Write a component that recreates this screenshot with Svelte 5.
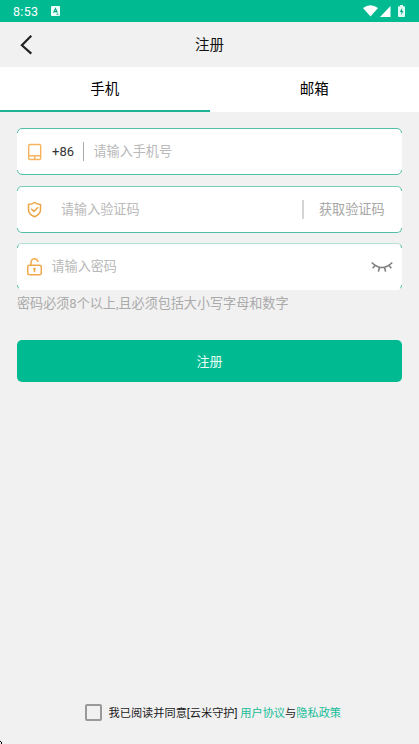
<script>
  let phone = $state('');
  let code = $state('');
  let password = $state('');
</script>

<div class="screen">
  <div class="status">
    <span class="time">8:53</span>
    <svg class="app" width="9" height="10" viewBox="0 0 9 10"><rect width="9" height="10" rx="1" fill="#effffb" /><path d="M2.600 6.800 4.500 2.600 6.400 6.800M3.300 5.600h2.400M5.500 8.300h2" fill="none" stroke="#00a984" stroke-width="1.100" /></svg>
    <span class="grow"></span>
    <svg class="wifi" width="15" height="12" viewBox="0 0 15 12"><path d="M0 3Q7.5-2.6 15 3L7.5 11.6Z" fill="#fff" /></svg>
    <svg class="signal" width="11" height="11" viewBox="0 0 11 11"><path d="M0 11 10.5 0V11Z" fill="#fff" /></svg>
    <svg class="battery" width="7" height="12" viewBox="0 0 7 12"><path d="M2 0h3v1.2h1.3q.7 0 .7.7v9.4q0 .7-.7.7H.7Q0 12 0 11.300V1.900q0-.7.7-.7H2Z" fill="#dffaf3" /><path d="M4.100 3 1.800 7h1.500v3l2-4H4.100Z" fill="#00a481" /></svg>
  </div>

  <header>
    <svg width="14" height="22" viewBox="0 0 14 22"><path d="M11.300 1.800 1.900 11.200l9.400 8.400" fill="none" stroke="#222" stroke-width="2.200" /></svg>
    <h1>注册</h1>
  </header>

  <nav>
    <div class="tab active">手机</div>
    <div class="tab">邮箱</div>
  </nav>

  <main>
    <div class="field first">
      <svg class="icon" width="18" height="20" viewBox="0 0 18 20" fill="none" stroke="#f5b460" stroke-width="1.500"><rect x="2.700" y="2.500" width="12" height="15" rx="1.500" /><path d="M2.700 13.700h12M8.700 14v3" /></svg>
      <span class="prefix">+86</span>
      <span class="bar"></span>
      <input class="phone" placeholder="请输入手机号" bind:value={phone} />
    </div>
    <div class="field second">
      <svg class="icon" width="18" height="20" viewBox="0 0 18 20" fill="none" stroke="#eda446" stroke-width="1.500"><path d="M8.500 2.500C10.500 4 12.500 4.300 14.500 4.500V9.500Q14.500 14.500 8.500 16.700 2.500 14.500 2.500 9.500V4.500C4.500 4.300 6.500 4 8.500 2.500Z" stroke-linejoin="round" /><path d="m5.200 8.800 2.700 2.600 4.300-4.200" /></svg>
      <input class="code" placeholder="请输入验证码" bind:value={code} />
      <span class="bar light"></span>
      <span class="get">获取验证码</span>
    </div>
    <div class="field third">
      <svg class="icon" width="18" height="20" viewBox="0 0 18 20" fill="none" stroke="#f2a84c" stroke-width="1.500"><rect x="1.700" y="8.300" width="13.600" height="9.500" rx="2" /><path d="M5 8.300V5.500A3.500 3.500 0 0 1 12 5" /><path d="M8.500 10.800v4.400M7.200 11.800h2.600" /></svg>
      <input class="pass" placeholder="请输入密码" bind:value={password} />
      <svg class="eye" width="22" height="12" viewBox="0 0 22 12" fill="none" stroke="#808080" stroke-width="1.600"><path d="M.7 1.500Q11 11.500 21.300 1.500M4.200 4.300 1.700 7.200M8.500 6.300 7.400 10.600M13.500 6.300l1.100 4.300M17.800 4.300l2.500 2.900" /></svg>
    </div>
    <p>密码必须8个以上,且必须包括大小写字母和数字</p>
    <button>注册</button>
  </main>

  <footer>
    <span class="box"></span>
    <span class="terms">我已阅读并同意[云米守护] <b>用户协议</b>与<b>隐私政策</b></span>
    <svg class="corner" width="3" height="4" viewBox="0 0 3 4"><path d="M0 1h1v1h1v2H1V2H0Z" fill="#000" /></svg>
  </footer>
</div>

<style>
  :global(body) { margin: 0; background: #f1f1f1; }
  .screen { display: flex; flex-direction: column; height: 744px; background: #f1f1f1; color: #111; font-family: Roboto, "Noto Sans CJK SC", sans-serif; overflow: hidden; position: relative; }
  .status { height: 22px; flex: none; display: flex; align-items: center; background: #00bb92; color: #fff; box-sizing: border-box; padding: 0 13px; }
  .time { font-size: 12.500px; line-height: 22px; width: 38px; letter-spacing: .3px; padding-top: 2px; }
  .grow { flex: 1; }
  .wifi { margin-right: 2px; }
  .signal { margin-right: 7px; }
  .battery { margin-right: 1px; }
  header { height: 45px; flex: none; display: grid; grid-template-columns: 40px 1fr 40px; align-items: center; }
  header svg { margin-left: 20px; }
  h1 { margin: 0; padding-top: 2px; text-align: center; font-size: 14.500px; font-weight: 400; line-height: 43px; }
  nav { height: 45px; flex: none; display: flex; background: #fff; }
  .tab { flex: 1; box-sizing: border-box; padding-top: 3px; text-align: center; font-size: 14.500px; line-height: 40px; color: #000; border-bottom: 2px solid transparent; }
  .active { border-color: #1fb395; }
  main { padding: 16px 17px 0; display: flex; flex-direction: column; }
  .field { position: relative; isolation: isolate; box-sizing: border-box; height: 47px; border: 1px solid #52bfa7; border-radius: 5px; background: #fff; display: flex; align-items: center; padding-left: 8px; margin-bottom: 11px; }
  .field::before { content: ""; position: absolute; z-index: -1; left: -1px; right: -1px; top: 4px; bottom: 4px; background: #fff; }
  .second { margin-bottom: 10px; border-top-color: #7bcdbb; }
  .third { margin-bottom: 0; border-top-color: #b5e0d6; border-bottom-color: #fff; }
  .icon { flex: none; }
  .prefix { font-size: 13px; color: #333; margin-left: 8px; width: 31px; }
  .bar { width: 1px; height: 19px; background: #aaa; }
  .light { width: 2px; background: #d4d4d4; }
  input { min-width: 0; flex: 1; border: 0; padding: 0; outline: 0; background: none; font: 13.080px/20px Roboto, "Noto Sans CJK SC", sans-serif; color: #222; }
  input::placeholder { color: #b9b9b9; opacity: 1; }
  .phone { margin-left: 9.500px; }
  .code { margin-left: 17px; }
  .pass { margin-left: 7.500px; }
  .get { font-size: 13.100px; line-height: 20px; color: #a6a6a6; margin: 0 16.500px 0 15px; }
  .eye { margin: 1px 8px 0 0; }
  p { margin: 4px 0 0; font-size: 13.080px; line-height: 20px; color: #aaa; white-space: nowrap; }
  button { margin-top: 26px; height: 42px; border: 0; border-radius: 5px; background: #00bb92; color: #e8fff8; font: 13px/20px Roboto, "Noto Sans CJK SC", sans-serif; padding: 2px 0 0; }
  footer { margin-top: auto; padding: 0 0 23px 85px; display: flex; align-items: center; height: 18px; }
  .box { width: 17px; height: 17px; box-sizing: border-box; border: 2px solid #999; border-radius: 2px; flex: none; }
  .terms { margin-left: 6.500px; padding-top: 3px; font-size: 11.200px; line-height: 18px; white-space: nowrap; color: #1a1a1a; }
  b { font-weight: 400; color: #17bd98; }
  .corner { position: absolute; left: 0; bottom: 0; }
</style>
